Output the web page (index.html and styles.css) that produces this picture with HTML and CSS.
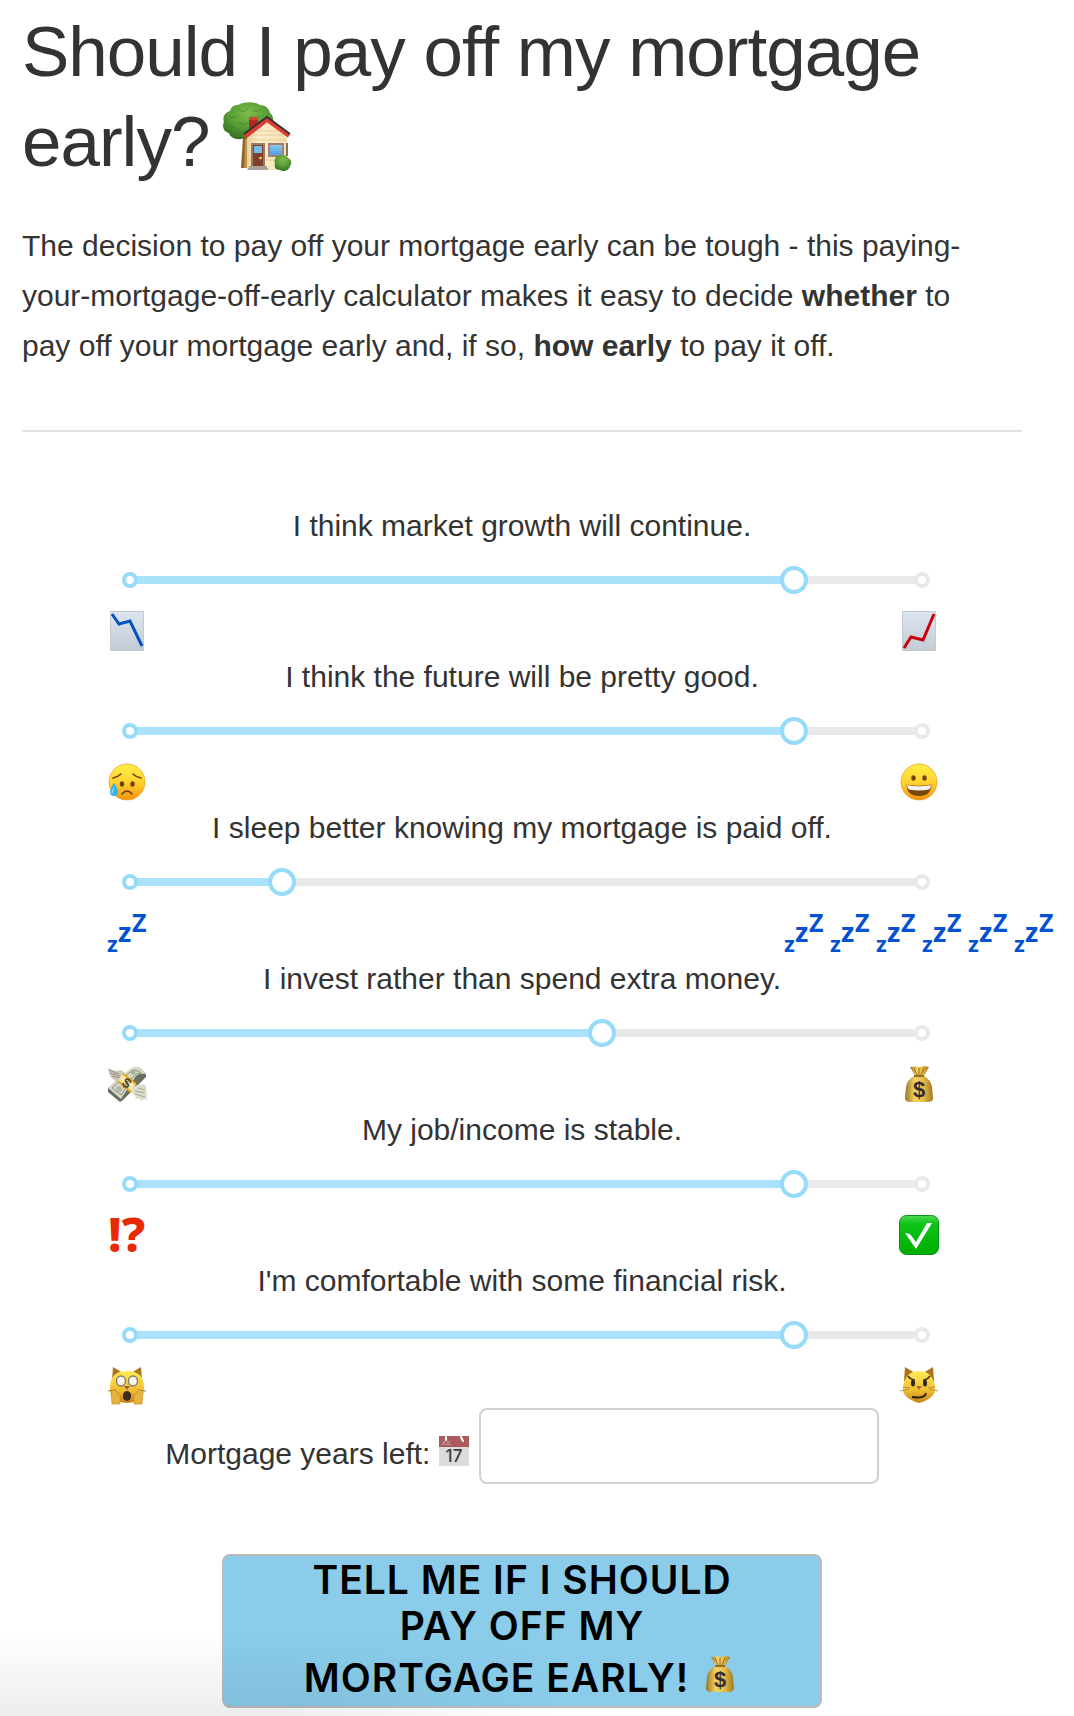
FILE: index.html
```html
<!DOCTYPE html>
<html lang="en">
<head>
<meta charset="utf-8">
<meta name="viewport" content="width=device-width, initial-scale=1">
<title>Should I pay off my mortgage early?</title>
<link rel="stylesheet" href="styles.css">
</head>
<body>
<svg class="sprite" aria-hidden="true">
  <defs>
    <linearGradient id="paper" x1="0" y1="0" x2="0" y2="1"><stop offset="0" stop-color="#dde6ef"/><stop offset="1" stop-color="#c3ccd5"/></linearGradient>
    <linearGradient id="face" x1="0" y1="0" x2="0" y2="1"><stop offset="0" stop-color="#ffee48"/><stop offset=".5" stop-color="#ffd42e"/><stop offset="1" stop-color="#f4920f"/></linearGradient>
    <linearGradient id="fur" x1="0" y1="0" x2="0" y2="1"><stop offset="0" stop-color="#ffed58"/><stop offset=".6" stop-color="#f0be2f"/><stop offset="1" stop-color="#c98218"/></linearGradient>
    <linearGradient id="sack" x1="0" y1="0" x2="1" y2="0"><stop offset="0" stop-color="#9a7422"/><stop offset=".35" stop-color="#f3d465"/><stop offset=".65" stop-color="#e6bd4b"/><stop offset="1" stop-color="#a17823"/></linearGradient>
    <linearGradient id="green" x1="0" y1="0" x2="0" y2="1"><stop offset="0" stop-color="#4fd957"/><stop offset=".22" stop-color="#0cc417"/><stop offset="1" stop-color="#00ad00"/></linearGradient>
    <radialGradient id="leaf" cx=".5" cy=".3" r=".7"><stop offset="0" stop-color="#7dbd4a"/><stop offset=".6" stop-color="#559a34"/><stop offset="1" stop-color="#376f23"/></radialGradient>
    <linearGradient id="wall" x1="0" y1="0" x2="1" y2="0"><stop offset="0" stop-color="#e9d3a4"/><stop offset=".3" stop-color="#fdeecb"/><stop offset="1" stop-color="#f5dfb2"/></linearGradient>
    <linearGradient id="glass" x1="0" y1="0" x2="0" y2="1"><stop offset="0" stop-color="#8ac8f0"/><stop offset="1" stop-color="#549fdc"/></linearGradient>
  </defs>
  <symbol id="house" viewBox="0 0 72 72">
    <path d="M22 35h5v31h-7z" fill="#8b6025"/>
    <path d="M24 35h2v31h-3z" fill="#c09047"/>
    <path d="M17 3c5-3 16-4 22 0 6 0 9 4 10 8 4 3 4 9 2 13-3 4-9 6-14 6-3 6-9 9-14 6-6 3-14 0-15-5-6-1-7-8-5-11-2-6 2-10 6-11 1-4 4-6 8-6z" fill="url(#leaf)"/>
    <path d="M8 14c3 2 5 2 8 0m1-7c3 3 7 3 10 0m3 7c3 2 6 2 9 0M5 24c3 2 6 2 9 0m4-4c3 3 6 3 9 0m-11 9c3 2 6 1 8-1m8-20c3 2 6 1 8-1" fill="none" stroke="#3f7a27" stroke-width="1" opacity=".6"/>
    <path d="M28 15h9v15h-9z" fill="#b32626"/><path d="M28 15h9v3h-9z" fill="#d9403b"/>
    <path d="M26 35 46 19l20 15v34H26z" fill="url(#wall)"/>
    <path d="M35 29h22M31 33h32M27 38h38M27 58h38" stroke="#e4cd9c" stroke-width="1"/>
    <path d="M24 35 46 18l22 16" fill="none" stroke="#df3b36" stroke-width="4"/>
    <path d="M23 32 46 15l23 17" fill="none" stroke="#3b3030" stroke-width="2"/>
    <path d="M30 41h14v25H30z" fill="#9b7962"/><path d="M32 43h10v23H32z" fill="#80402c"/><path d="M33 44h8v7h-8z" fill="#74bbed"/>
    <circle cx="39.500" cy="56" r="1.300" fill="#ffd36a"/>
    <path d="M47 41h16v14H47z" fill="#a08370"/><path d="M49 43h12v10H49z" fill="url(#glass)"/><path d="M66 41v13" stroke="#85705c" stroke-width="2"/>
    <path d="M28 64h18v2h1v2H27v-2h1z" fill="#a7a198"/>
    <path d="M57 54c4-2 9-1 10 2 4 2 4 6 2 8-1 5-7 6-10 4-5 0-6-4-5-6-1-4 0-7 3-8z" fill="url(#leaf)"/>
  </symbol>
  <symbol id="chart-down" viewBox="0 0 40 40">
    <path d="M3.500.500h33v39h-33z" fill="url(#paper)" stroke="#c2c9d0"/>
    <path d="M5 3l7 10 11-3 12 25" fill="none" stroke="#0454c6" stroke-width="3"/>
  </symbol>
  <symbol id="chart-up" viewBox="0 0 40 40">
    <path d="M3.500.500h33v39h-33z" fill="url(#paper)" stroke="#c2c9d0"/>
    <path d="M5 37l7-11 12 3L35 3" fill="none" stroke="#c6000b" stroke-width="3"/>
  </symbol>
  <symbol id="sad" viewBox="0 0 40 40">
    <circle cx="20" cy="20" r="18" fill="url(#face)" stroke="#e99b1c" stroke-width=".7"/>
    <path d="M6 16q5-1 8-4M26 12q3 3 8 4M15 32q5-6 10 0" fill="none" stroke="#70400c" stroke-width="1.600" stroke-linecap="round"/>
    <ellipse cx="15" cy="22" rx="2.200" ry="2.700" fill="#71400d"/><ellipse cx="25.500" cy="22" rx="2.200" ry="2.700" fill="#71400d"/>
    <path d="M7 21q-4 6-4 9a4 4 0 0 0 8 0q0-3-4-9z" fill="#36b3ed"/><path d="M7 26q-2 3-2 5" fill="none" stroke="#b5efff"/>
  </symbol>
  <symbol id="grin" viewBox="0 0 40 40">
    <circle cx="20" cy="20" r="18" fill="url(#face)" stroke="#e99b1c" stroke-width=".7"/>
    <ellipse cx="14.500" cy="16" rx="2.200" ry="2.700" fill="#71400d"/><ellipse cx="25.500" cy="16" rx="2.200" ry="2.700" fill="#71400d"/>
    <path d="M7.500 22.500q12.500 2.500 25 0Q32 34 20 34T7.500 22.500z" fill="#76480c"/>
    <path d="M8 23q12 2.500 24 0 0 3-2 4.500-10 2-20 0-2-1.500-2-4.500z" fill="#f4f2ef"/>
  </symbol>
  <symbol id="cash" viewBox="0 0 40 40">
    <path d="M1 4q1 9 6 12 4 4 10 1l1-8q-3-4-8-2-5 0-9-3z" fill="#cdc9b8"/><path d="M2 6l10 4M3 9l10 3M5 12l9 2" stroke="#96917e"/>
    <path d="M1 24 24 5q4-3 9-1l6 6v3L16 36l-3 2L1 28z" fill="#696d62"/>
    <path d="M1 24 23 5q5-4 10-1l6 6q-7-1-10 2L14 35z" fill="#d6d7c6"/>
    <path d="M5 24 23 8q4-3 8-1l3 2q-5 0-8 4L14 31z" fill="none" stroke="#8c9180"/>
    <circle cx="26" cy="8" r="2.500" fill="#9bb39b"/><circle cx="12" cy="25" r="3" fill="#b3b8a2"/>
    <path d="m16 10 13 10-5 8-13-11z" fill="#f4e9b0"/><path d="m16 10 13 10M11 17l13 11" stroke="#efa612" stroke-width="2"/>
    <path d="M25 25q4-5 8-4 4-2 6 1l1 14-3-1-3 2-2-3-3 1-1-4-3-1z" fill="#dedccb"/><path d="M28 27l9 2M28 30l10 3M31 24l7 2" stroke="#a9a490"/>
  </symbol>
  <symbol id="money-bag" viewBox="0 0 40 40">
    <path d="M11 3q4 0 6-1 4 2 7 0 3 0 6 1l-5 9h-9z" fill="url(#sack)"/>
    <path d="M15 4l3 7m2-7v7m5-7-3 7" stroke="#916921"/>
    <path d="M15 12h10q7 4 8 11l1 11q0 4-5 4H11q-5 0-5-4l1-11q1-7 8-11z" fill="url(#sack)"/>
    <path d="M15 12h10" stroke="#715019" stroke-width="1.500"/>
  </symbol>
  <symbol id="check" viewBox="0 0 40 40">
    <rect x=".5" y=".5" width="39" height="39" rx="7" fill="url(#green)" stroke="#07901a"/>
    <path d="m6 18 5 1 6 8L28 8h5L17 34z" fill="#fff"/>
  </symbol>
  <symbol id="cat-shock" viewBox="0 0 40 40">
    <path d="m5 14 1-13 10 6h8l10-6 1 13z" fill="#ad741d"/><path d="M20 5q17 0 17 17 0 14-17 15Q3 36 3 22 3 5 20 5z" fill="url(#fur)"/>
    <ellipse cx="14" cy="15" rx="4.500" ry="5" fill="#f9f7ec" stroke="#827a75" stroke-width="1.400"/><ellipse cx="26" cy="15" rx="4.500" ry="5" fill="#f9f7ec" stroke="#827a75" stroke-width="1.400"/>
    <path d="m17 20h6l-3 4z" fill="#956146"/><ellipse cx="20" cy="30" rx="4.200" ry="5" fill="#3d2b22"/>
    <path d="M1 25l8-1m22 0 8 1" stroke="#8a7550"/>
    <path d="M4 26q3-4 6 0l3 4v8H5zM36 26q-3-4-6 0l-3 4v8h8z" fill="#e8b33d" stroke="#c98c22" stroke-width=".7"/>
  </symbol>
  <symbol id="cat-smirk" viewBox="0 0 40 40">
    <path d="m5 15 1-14 10 6h8l10-6 1 14z" fill="#ad741d"/><path d="M20 5q13 0 16 15 2 12-16 17Q2 32 4 20 7 5 20 5z" fill="url(#fur)"/>
    <path d="M9 10q3 4 7 4m15-4q-3 4-7 4" fill="none" stroke="#513b18" stroke-width="1.700"/>
    <ellipse cx="14" cy="17" rx="2" ry="3.500" fill="#2e251c"/><ellipse cx="26" cy="17" rx="2" ry="3.500" fill="#2e251c"/>
    <path d="M17 20h6l-3 4z" fill="#a66c4b"/><path d="M13 31q13 2 14-4" fill="none" stroke="#2d2116" stroke-width="1.800"/>
    <path d="m1 25 9-2m20 0 9 2M4 21l7 1m18 0 7-1" stroke="#a1864b" stroke-width=".8"/>
  </symbol>
  <symbol id="calendar" viewBox="0 0 30 30">
    <path d="M0 0h30v30H0z" fill="#dcdcdc"/><path d="M0 0h30v11H0z" fill="#aa5b5c"/>
    <path d="M7 1v3m15-3 2 4" stroke="#fff" stroke-width="2" stroke-linecap="round"/>
  </symbol>
</svg>

<main class="container">
  <h1 class="title">Should I pay off my mortgage early? <svg class="title-icon" role="img" aria-label="House with garden"><use href="#house"/></svg></h1>
  <p class="intro">The decision to pay off your mortgage early can be tough - this paying-your-mortgage-off-early calculator makes it easy to decide <strong>whether</strong> to pay off your mortgage early and, if so, <strong>how early</strong> to pay it off.</p>
  <hr class="divider">

  <form class="form">
    <div class="question">
      <label class="prompt" for="market">I think market growth will continue.</label>
      <div class="slider"><input class="range" id="market" type="range" min="0" max="100" value="84" style="--value: 84%"></div>
      <div class="marks"><span class="mark"><svg class="icon"><use href="#chart-down"/></svg></span><span class="mark"><svg class="icon"><use href="#chart-up"/></svg></span></div>
    </div>
    <div class="question">
      <label class="prompt" for="future">I think the future will be pretty good.</label>
      <div class="slider"><input class="range" id="future" type="range" min="0" max="100" value="84" style="--value: 84%"></div>
      <div class="marks"><span class="mark"><svg class="icon"><use href="#sad"/></svg></span><span class="mark"><svg class="icon"><use href="#grin"/></svg></span></div>
    </div>
    <div class="question">
      <label class="prompt" for="sleep">I sleep better knowing my mortgage is paid off.</label>
      <div class="slider"><input class="range" id="sleep" type="range" min="0" max="100" value="20" style="--value: 20%"></div>
      <div class="marks">
        <span class="mark"><svg class="icon zzz" viewBox="0 0 40 40"><text x="0" y="39" font-size="22">z</text><text x="11" y="29" font-size="27">z</text><text x="25" y="19" font-size="25">Z</text></svg></span>
        <span class="mark">
          <svg class="icon zzz" viewBox="0 0 40 40"><text x="0" y="39" font-size="22">z</text><text x="11" y="29" font-size="27">z</text><text x="25" y="19" font-size="25">Z</text></svg>
          <svg class="icon zzz" viewBox="0 0 40 40"><text x="0" y="39" font-size="22">z</text><text x="11" y="29" font-size="27">z</text><text x="25" y="19" font-size="25">Z</text></svg>
          <svg class="icon zzz" viewBox="0 0 40 40"><text x="0" y="39" font-size="22">z</text><text x="11" y="29" font-size="27">z</text><text x="25" y="19" font-size="25">Z</text></svg>
          <svg class="icon zzz" viewBox="0 0 40 40"><text x="0" y="39" font-size="22">z</text><text x="11" y="29" font-size="27">z</text><text x="25" y="19" font-size="25">Z</text></svg>
          <svg class="icon zzz" viewBox="0 0 40 40"><text x="0" y="39" font-size="22">z</text><text x="11" y="29" font-size="27">z</text><text x="25" y="19" font-size="25">Z</text></svg>
          <svg class="icon zzz" viewBox="0 0 40 40"><text x="0" y="39" font-size="22">z</text><text x="11" y="29" font-size="27">z</text><text x="25" y="19" font-size="25">Z</text></svg>
        </span>
      </div>
    </div>
    <div class="question">
      <label class="prompt" for="invest">I invest rather than spend extra money.</label>
      <div class="slider"><input class="range" id="invest" type="range" min="0" max="100" value="60" style="--value: 60%"></div>
      <div class="marks"><span class="mark"><svg class="icon" viewBox="0 0 40 40"><use href="#cash"/><text class="cash-sign" x="-4" y="5" transform="translate(20 19) rotate(35)">$</text></svg></span><span class="mark"><svg class="icon" viewBox="0 0 40 40"><use href="#money-bag"/><text class="bag-sign" x="20" y="33">$</text></svg></span></div>
    </div>
    <div class="question">
      <label class="prompt" for="income">My job/income is stable.</label>
      <div class="slider"><input class="range" id="income" type="range" min="0" max="100" value="84" style="--value: 84%"></div>
      <div class="marks"><span class="mark"><svg class="icon" viewBox="0 0 40 40"><text class="alert-sign" x="1" y="37">!?</text></svg></span><span class="mark"><svg class="icon"><use href="#check"/></svg></span></div>
    </div>
    <div class="question">
      <label class="prompt" for="risk">I'm comfortable with some financial risk.</label>
      <div class="slider"><input class="range" id="risk" type="range" min="0" max="100" value="84" style="--value: 84%"></div>
      <div class="marks"><span class="mark"><svg class="icon"><use href="#cat-shock"/></svg></span><span class="mark"><svg class="icon"><use href="#cat-smirk"/></svg></span></div>
    </div>

    <div class="years">
      <label class="years-label" for="years">Mortgage years left: <svg class="years-icon" viewBox="0 0 30 30" aria-hidden="true"><use href="#calendar"/><text class="calendar-month" x="2" y="9">JUL</text><text class="calendar-day" x="15" y="26">17</text></svg></label>
      <input class="years-input" id="years" type="text" inputmode="numeric">
    </div>
    <button class="submit" type="button">Tell me if I should pay off my mortgage early! <svg class="submit-icon" viewBox="0 0 40 40" aria-hidden="true"><use href="#money-bag"/><text class="bag-sign" x="20" y="33">$</text></svg></button>
  </form>
</main>
</body>
</html>
```
FILE: styles.css
```css
*,
*::before,
*::after {
  box-sizing: border-box;
}

body {
  margin: 0;
  background: #fff;
  color: #333;
  font-family: "Liberation Sans", Arial, sans-serif;
  font-size: 30px;
  line-height: 48px;
}

/* soft shade in the lower left corner of the window */
body::after {
  content: "";
  position: fixed;
  left: 0;
  bottom: 0;
  width: 52%;
  height: 84px;
  background: linear-gradient(to bottom, rgba(0, 0, 0, 0), rgba(0, 0, 0, 0.07));
  -webkit-mask-image: linear-gradient(to right, #000 50%, transparent);
  mask-image: linear-gradient(to right, #000 50%, transparent);
  pointer-events: none;
}

.sprite {
  position: absolute;
  width: 0;
  height: 0;
}

.container {
  padding: 7px 52px 8px 22px;
}

.title {
  margin: 0 0 34px;
  font-size: 71px;
  font-weight: 400;
  line-height: 90px;
  letter-spacing: -1px;
}

.title-icon {
  width: 72px;
  height: 72px;
  margin-left: -7px;
  vertical-align: -8px;
}

.intro {
  margin: 0 0 59px;
  padding-right: 24px;
  line-height: 50px;
}

.divider {
  margin: 0 0 70px;
  border: 0;
  border-top: 2px solid #e1e1e1;
}

.form {
  display: flex;
  flex-direction: column;
}

.question {
  display: flex;
  flex-direction: column;
  padding: 0 86px;
  margin-bottom: 2px;
}

.prompt {
  margin-bottom: 16px;
  text-align: center;
}

.slider {
  position: relative;
  display: flex;
  margin-bottom: 17px;
}

/* end dots of the rail */
.slider::before,
.slider::after {
  content: "";
  position: absolute;
  top: 6px;
  width: 16px;
  height: 16px;
  border: 4px solid #96dbfa;
  border-radius: 50%;
  background: #fff;
  pointer-events: none;
}

.slider::before {
  left: 14px;
}

.slider::after {
  right: 6px;
  border-color: #e9e9e9;
}

.range {
  appearance: none;
  -webkit-appearance: none;
  flex: 1;
  height: 28px;
  margin: 0;
  background: linear-gradient(to right, #abe2fb var(--value), #e9e9e9 var(--value)) center / calc(100% - 32px) 8px no-repeat;
}

.range::-webkit-slider-thumb {
  -webkit-appearance: none;
  width: 28px;
  height: 28px;
  border: 4px solid #96dbfa;
  border-radius: 50%;
  background: #fff;
}

.range::-moz-range-thumb {
  width: 28px;
  height: 28px;
  border: 4px solid #96dbfa;
  border-radius: 50%;
  background: #fff;
}

.marks {
  display: flex;
  justify-content: space-between;
  margin: 0 -3px 0 -1px;
}

/* a mark wider than one icon stays centred on its end of the rail */
.mark {
  display: flex;
  justify-content: center;
  gap: 6px;
  width: 40px;
}

.icon {
  flex: none;
  width: 40px;
  height: 40px;
  overflow: visible;
}

.zzz {
  fill: #0452d0;
  font-family: "Noto Sans", sans-serif;
  font-weight: 700;
}

.alert-sign {
  fill: #e72a04;
  font-family: "Noto Sans", sans-serif;
  font-size: 48px;
  font-weight: 800;
}

.cash-sign {
  fill: #594322;
  font-size: 14px;
  font-weight: 700;
}

.bag-sign {
  fill: #332a32;
  font-family: "Liberation Sans", Arial, sans-serif;
  font-size: 22px;
  font-weight: 700;
  letter-spacing: 0;
  text-anchor: middle;
}

.years {
  display: flex;
  justify-content: center;
  align-items: center;
  gap: 10px;
  margin-bottom: 70px;
}

.years-label {
  padding-top: 15px;
}

.years-icon {
  width: 30px;
  height: 30px;
  vertical-align: -2px;
  overflow: visible;
}

.calendar-month {
  fill: #dfb8b8;
  font-size: 6px;
}

.calendar-day {
  fill: #3d3d3d;
  font-family: Inter, sans-serif;
  font-size: 17px;
  font-weight: 500;
  text-anchor: middle;
}

.years-input {
  width: 400px;
  height: 76px;
  padding: 12px 20px;
  border: 2px solid #d1d1d1;
  border-radius: 8px;
  background: #fff;
  color: inherit;
  font: inherit;
}

.submit {
  align-self: center;
  width: 600px;
  max-width: 100%;
  min-height: 154px;
  padding: 0 76px 4px;
  border: 2px solid #bbb;
  border-radius: 8px;
  background: #8accea;
  color: #000;
  font-family: Inter, sans-serif;
  font-size: 39px;
  font-weight: 600;
  line-height: 46px;
  letter-spacing: 1px;
  text-transform: uppercase;
}

.submit-icon {
  width: 40px;
  height: 40px;
  margin-top: 5px;
  vertical-align: -2px;
  overflow: visible;
}
```
